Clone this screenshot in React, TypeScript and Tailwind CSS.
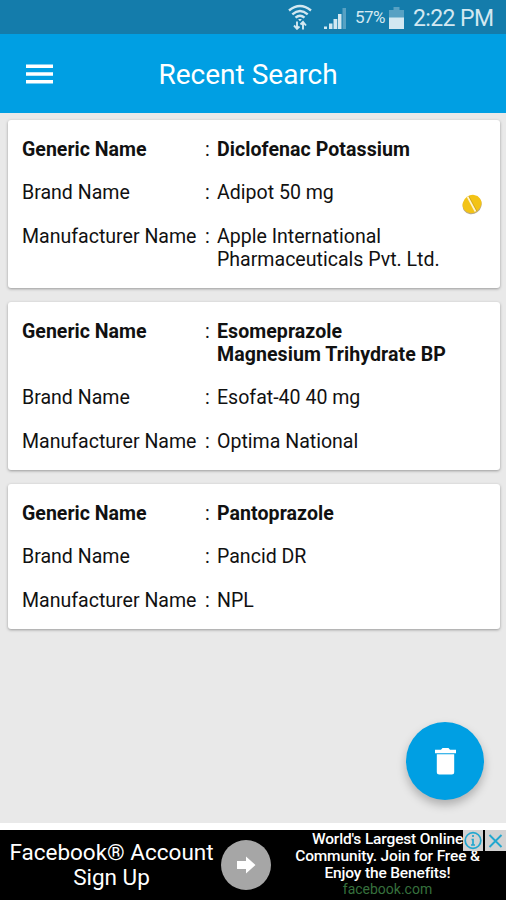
const searches = [
  {
    generic: "Diclofenac Potassium",
    brand: "Adipot 50 mg",
    manufacturer: "Apple International Pharmaceuticals Pvt. Ltd.",
    hasPill: true,
  },
  {
    generic: "Esomeprazole Magnesium Trihydrate BP",
    brand: "Esofat-40 40 mg",
    manufacturer: "Optima National",
    hasPill: false,
  },
  {
    generic: "Pantoprazole",
    brand: "Pancid DR",
    manufacturer: "NPL",
    hasPill: false,
  },
];

const StatusBar = () => (
  <div className="flex h-[34px] items-center justify-end bg-[#147cab] pr-[13px] text-[#d3e8f1]">
    <svg className="h-[26px] w-[24px]" viewBox="0 0 24 26" fill="none" stroke="currentColor">
      <path d="M1 6.5Q12 -2.5 23 6.5" strokeWidth="2.4" />
      <path d="M4.3 10.300Q12 3.8 19.7 10.300" strokeWidth="2.4" />
      <path d="M7.5 13.7Q12 9.8 16.5 13.7" strokeWidth="2.4" />
      <path d="M10.8 15.5H13.2L12 16.8Z" fill="currentColor" strokeWidth="1" />
      <path d="M9 17.5V25M6 21.500L9 24.8L11.500 22.500M15 25.500V18M12.500 20.500L15 18L18 21.500" strokeWidth="1.9" />
    </svg>
    <svg className="mt-px ml-[11px] h-[22px] w-[24px]" viewBox="0 0 24 22" fill="currentColor">
      <path d="M1 19.500h3V22H1zM6 16.500h3.500V22H6zM10.500 12h3.800v10h-3.800zM15 7h3.500v15H15z" />
      <path d="M19.500 1h3.500v21h-3.500z" opacity="0.35" />
    </svg>
    <span className="mt-[2px] ml-[8px] w-[31px] text-[17px] tracking-[-0.6px]">57%</span>
    <svg className="mt-px ml-[3px] h-[22px] w-[15px]" viewBox="0 0 15 22" fill="currentColor">
      <path d="M4.500 0h6v3H15v8H0V3h4.500z" opacity="0.35" />
      <path d="M0 10.500h15V22H0z" />
    </svg>
    <span className="mt-[5px] ml-[9px] w-[80px] text-[23px] tracking-[-0.6px] whitespace-nowrap">2:22 PM</span>
  </div>
);

const Pill = () => (
  <svg className="absolute top-[73px] right-[17px] h-[22px] w-[22px]" viewBox="0 0 22 22">
    <g transform="rotate(-35 11 11)">
      <ellipse cx="10.500" cy="12" rx="9.800" ry="8.800" fill="#b9a98a" />
      <ellipse cx="11" cy="11" rx="9.800" ry="8.800" fill="#f3c316" />
    </g>
    <path d="M6.500 3.500L14.500 18.500" stroke="#fff3cf" strokeWidth="1.8" />
    <path d="M7.800 3.200L15.800 18" stroke="#b08c20" strokeWidth="0.5" />
  </svg>
);

const Row = ({ label, value, bold }: { label: string; value: string; bold?: boolean }) => (
  <div className="flex">
    <span className={bold ? "w-[183px] font-bold" : "w-[183px]"}>{label}</span>
    <span className="w-[12px]">:</span>
    <span className={bold ? "w-[232px] font-bold tracking-[0.06px]" : "w-[232px]"}>{value}</span>
  </div>
);

export default function App() {
  return (
    <div className="flex h-[900px] w-[506px] flex-col overflow-hidden bg-[#e9e9e9] font-['Roboto',sans-serif]">
      <StatusBar />
      <header className="flex h-[79px] items-center bg-[#009fe3] text-white">
        <svg className="ml-[26px] h-[20px] w-[27px]" viewBox="0 0 27 20" fill="currentColor">
          <path d="M0 0.500h27v3.500H0zM0 8.250h27v3.500H0zM0 16h27v3.500H0z" />
        </svg>
        <h1 className="mt-[3px] ml-[105.5px] text-[28px] leading-none">Recent Search</h1>
      </header>

      <main className="relative flex flex-1 flex-col gap-[14px] pt-[7px] pr-[6px] pl-[8px]">
        {searches.map((item) => (
          <section
            key={item.generic}
            className="relative flex flex-col gap-[20.4px] rounded-[3px] bg-white px-[14px] pt-[17.6px] pb-[16.6px] text-[19.56px] leading-[23.25px] text-[#111] shadow-[0_1px_3px_rgba(0,0,0,0.35)]"
          >
            <Row label="Generic Name" value={item.generic} bold />
            <Row label="Brand Name" value={item.brand} />
            <Row label="Manufacturer Name" value={item.manufacturer} />
            {item.hasPill && <Pill />}
          </section>
        ))}

        <button className="absolute right-[22px] bottom-[23px] flex h-[78px] w-[78px] items-center justify-center rounded-full bg-[#009fe3] shadow-[0_5px_10px_rgba(0,0,0,0.25)]">
          <svg className="h-[27px] w-[21px]" viewBox="0 0 21 27" fill="white">
            <path d="M0 1.800h6L7.500 0h6L15 1.800h6v3.400H0zM1.800 6.200h17.400V24a2.500 2.500 0 0 1-2.500 2.500H4.300A2.500 2.500 0 0 1 1.800 24z" />
          </svg>
        </button>
      </main>

      <footer className="relative flex h-[77px] border-t-[7px] border-white bg-black text-white">
        <p className="w-[223px] pt-[10px] text-center text-[22.5px] leading-[25px]">
          Facebook® Account
          <br />
          Sign Up
        </p>
        <div className="mt-[10px] -ml-[2px] flex h-[50px] w-[50px] items-center justify-center rounded-full bg-[#a6a6a6]">
          <svg className="h-[18px] w-[19px]" viewBox="0 0 19 18" fill="white">
            <path d="M0 5h9V0.500L18.500 9L9 17.500V13H0z" />
          </svg>
        </div>
        <div className="w-[233px] pt-px text-center text-[15.5px] leading-[17px] font-medium tracking-[-0.15px] whitespace-nowrap">
          <p>World's Largest Online</p>
          <p>Community. Join for Free &amp;</p>
          <p>Enjoy the Benefits!</p>
          <p className="-mt-px text-[14px] leading-[16px] font-normal tracking-normal text-[#36703d]">facebook.com</p>
        </div>
        <div className="absolute top-0 right-0 flex gap-[2px]">
          <svg className="h-[21px] w-[20px] bg-[#d2d2d2]" viewBox="0 0 20 21" fill="none" stroke="#22a7cf" strokeWidth="1.7">
            <circle cx="10" cy="10.500" r="7.800" />
            <path d="M10 5v2M8.500 9.500H10V15M8 15h4" />
          </svg>
          <svg className="h-[21px] w-[21px] bg-[#d2d2d2]" viewBox="0 0 21 21" fill="none" stroke="#22a7cf" strokeWidth="1.9">
            <path d="M4.500 5L16.500 17M16.500 5L4.500 17" />
          </svg>
        </div>
      </footer>
    </div>
  );
}
